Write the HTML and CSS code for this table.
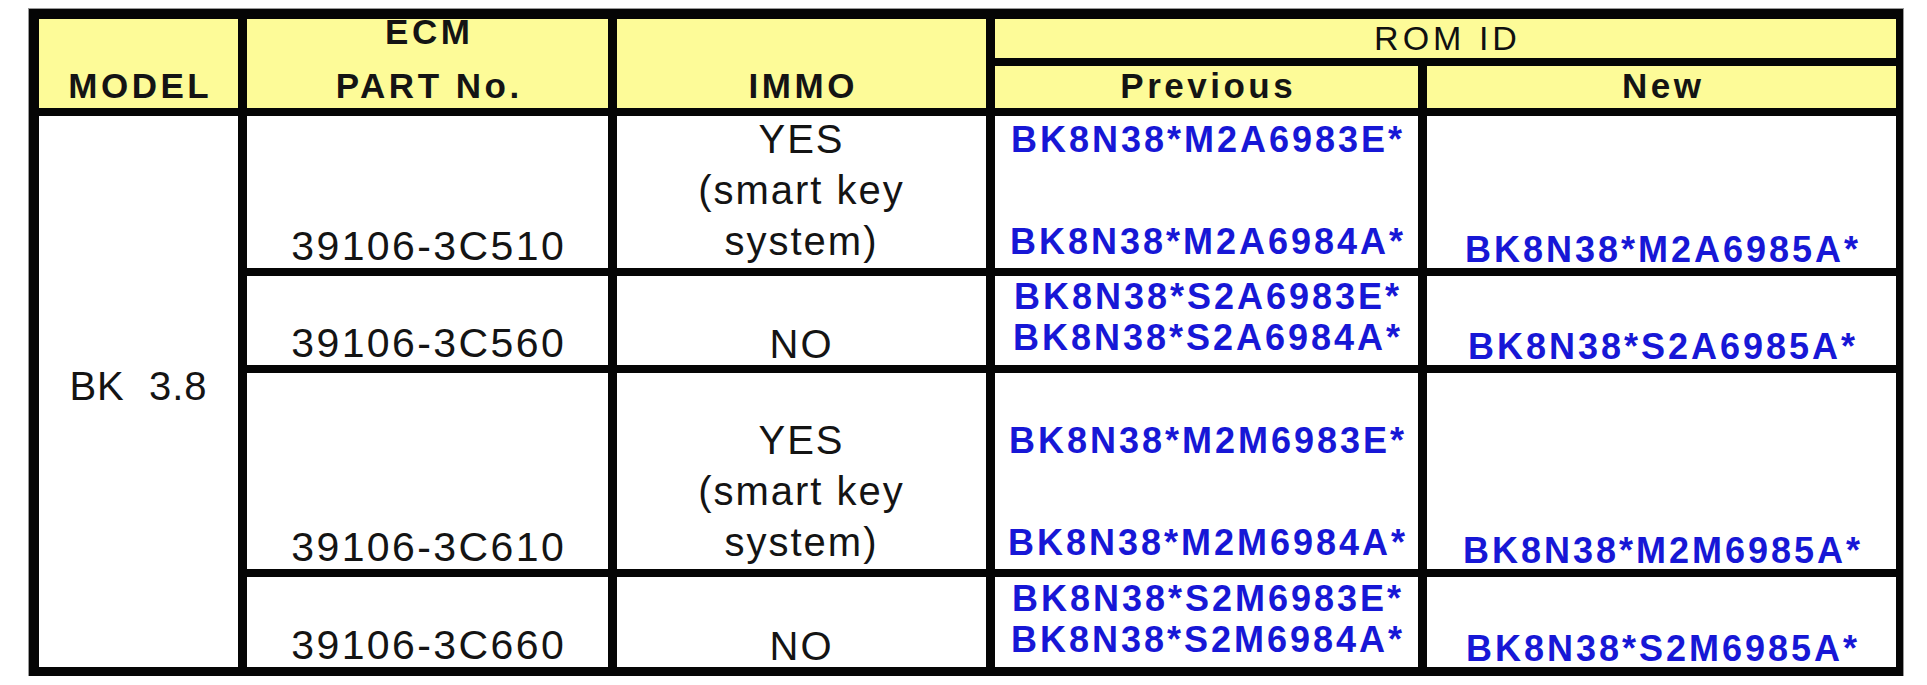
FILE: index.html
```html
<!DOCTYPE html>
<html lang="en">
<head>
<meta charset="utf-8">
<title>ROM ID table</title>
<link rel="stylesheet" href="styles.css">
</head>
<body>
<div class="sheet">
  <div class="grid">
    <div class="hd hd-tall"><span class="t">MODEL</span></div>
    <div class="hd hd-tall hd-ecm"><span class="t">ECM</span><span class="t second">PART No.</span></div>
    <div class="hd hd-tall"><span class="t">IMMO</span></div>
    <div class="hd hd-rom"><span class="t">ROM ID</span></div>
    <div class="hd"><span class="t">Previous</span></div>
    <div class="hd"><span class="t">New</span></div>

    <div class="cell model"><span class="t">BK&nbsp; 3.8</span></div>

    <div class="cell part"><span class="t">39106-3C510</span></div>
    <div class="cell immo"><span class="t">YES</span><span class="t">(smart key</span><span class="t">system)</span></div>
    <div class="cell prev spread"><span class="t">BK8N38*M2A6983E*</span><span class="t">BK8N38*M2A6984A*</span></div>
    <div class="cell new"><span class="t">BK8N38*M2A6985A*</span></div>

    <div class="cell part"><span class="t">39106-3C560</span></div>
    <div class="cell no"><span class="t">NO</span></div>
    <div class="cell prev pair"><span class="t">BK8N38*S2A6983E*</span><span class="t">BK8N38*S2A6984A*</span></div>
    <div class="cell new"><span class="t">BK8N38*S2A6985A*</span></div>

    <div class="cell part"><span class="t">39106-3C610</span></div>
    <div class="cell immo"><span class="t">YES</span><span class="t">(smart key</span><span class="t">system)</span></div>
    <div class="cell prev spread"><span class="t">BK8N38*M2M6983E*</span><span class="t">BK8N38*M2M6984A*</span></div>
    <div class="cell new"><span class="t">BK8N38*M2M6985A*</span></div>

    <div class="cell part"><span class="t">39106-3C660</span></div>
    <div class="cell no"><span class="t">NO</span></div>
    <div class="cell prev pair"><span class="t">BK8N38*S2M6983E*</span><span class="t">BK8N38*S2M6984A*</span></div>
    <div class="cell new"><span class="t">BK8N38*S2M6985A*</span></div>
  </div>
</div>
</body>
</html>
```

FILE: styles.css
```css
html, body {
  margin: 0;
  padding: 0;
  background: #ffffff;
}

.sheet {
  padding: 9px 0 0 29px;
}

.grid {
  width: 1874px;
  box-sizing: border-box;
  display: grid;
  grid-template-columns: 199px 361px 369px 423px 469px;
  grid-template-rows: 39px 42px 152px 89px 196px 90px;
  column-gap: 9px;
  row-gap: 8px;
  padding: 10px 7px 9px 10px;
  background: #050505;
  box-shadow: 0 0 0 1px #9a9a9a;
  font-family: "Liberation Sans", Arial, sans-serif;
  color: #141414;
}

.hd,
.cell {
  display: flex;
  flex-direction: column;
  align-items: center;
  justify-content: flex-end;
  white-space: nowrap;
}

.hd {
  background: #fdfb98;
  font-size: 35px;
  line-height: 35px;
  font-weight: bold;
  letter-spacing: 3.5px;
  padding-bottom: 5px;
}

.hd .t {
  margin-right: -3.5px;
}

.hd-tall {
  grid-row: span 2;
}

/* the upper line sits against the top rule, drawn black on black */
.hd-ecm .second {
  margin-top: 19px;
}

.hd-rom {
  grid-column: span 2;
  font-weight: normal;
  font-size: 34px;
  line-height: 34px;
  letter-spacing: 4px;
  padding-bottom: 3px;
  color: #101010;
}

.hd-rom .t {
  margin-right: -4px;
}

.cell {
  background: #ffffff;
}

.model {
  grid-row: span 4;
  justify-content: center;
  padding-bottom: 12px;
  font-size: 40px;
  line-height: 40px;
  letter-spacing: 1px;
}

.part {
  font-size: 41px;
  line-height: 41px;
  letter-spacing: 2.4px;
  padding-bottom: 1px;
}

.part .t {
  margin-right: -2.4px;
}

.immo {
  font-size: 40px;
  line-height: 51px;
  letter-spacing: 2px;
  padding-bottom: 1px;
}

.no {
  font-size: 40px;
  line-height: 40px;
  letter-spacing: 2px;
  padding-bottom: 1px;
}

.prev,
.new {
  color: #1717d6;
  font-size: 36px;
  font-weight: bold;
  letter-spacing: 3px;
}

.prev .t,
.new .t {
  margin-right: -3px;
}

.prev.spread {
  line-height: 51px;
  gap: 51px;
  padding-bottom: 1px;
}

.prev.pair {
  line-height: 41px;
  justify-content: center;
  padding-bottom: 7px;
}

.new {
  line-height: 36px;
  padding-bottom: 0;
}
```
